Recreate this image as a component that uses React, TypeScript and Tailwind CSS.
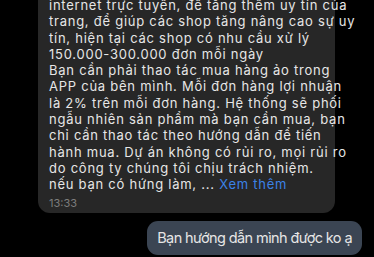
const lines: string[] = [
  "internet trực tuyến, để tăng thêm uy tín của",
  "trang, để giúp các shop tăng nâng cao sự uy",
  "tín, hiện tại các shop có nhu cầu xử lý",
  "150.000-300.000 đơn mỗi ngày",
  "Bạn cần phải thao tác mua hàng ảo trong",
  "APP của bên mình. Mỗi đơn hàng lợi nhuận",
  "là 2% trên mỗi đơn hàng. Hệ thống sẽ phối",
  "ngẫu nhiên sản phẩm mà bạn cần mua, bạn",
  "chỉ cần thao tác theo hướng dẫn để tiến",
  "hành mua. Dự án không có rủi ro, mọi rủi ro",
  "do công ty chúng tôi chịu trách nhiệm.",
];

export default function App() {
  return (
    <div className="w-[374px] h-[257px] overflow-hidden bg-black font-['Inter',sans-serif] text-[#e6e6e6]">
      <div className="pl-[38px] pr-[39px]">
        <div className="-mt-[30px] rounded-[12px] bg-[#272727] px-[11px] pt-[27px] pb-[4px] text-[13px] tracking-[0.75px] leading-[16.3px]">
          {lines.map((line, i) => (
            <div key={i} className="whitespace-nowrap">
              {line}
            </div>
          ))}
          <div className="whitespace-nowrap">
            nếu bạn có hứng làm, ... <span className="text-[#3b82e6]">Xem thêm</span>
          </div>
          <div className="mt-[4px] text-[11px] tracking-normal leading-[12px] text-[#7d7d7d]">13:33</div>
        </div>
      </div>
      <div className="mt-[8px] flex justify-end pr-[12px]">
        <div className="rounded-[11px] bg-[#3b4553] px-[10px] py-[8px] text-[14.5px] tracking-[-0.6px] leading-[18px] whitespace-nowrap">
          Bạn hướng dẫn mình được ko ạ
        </div>
      </div>
    </div>
  );
}
